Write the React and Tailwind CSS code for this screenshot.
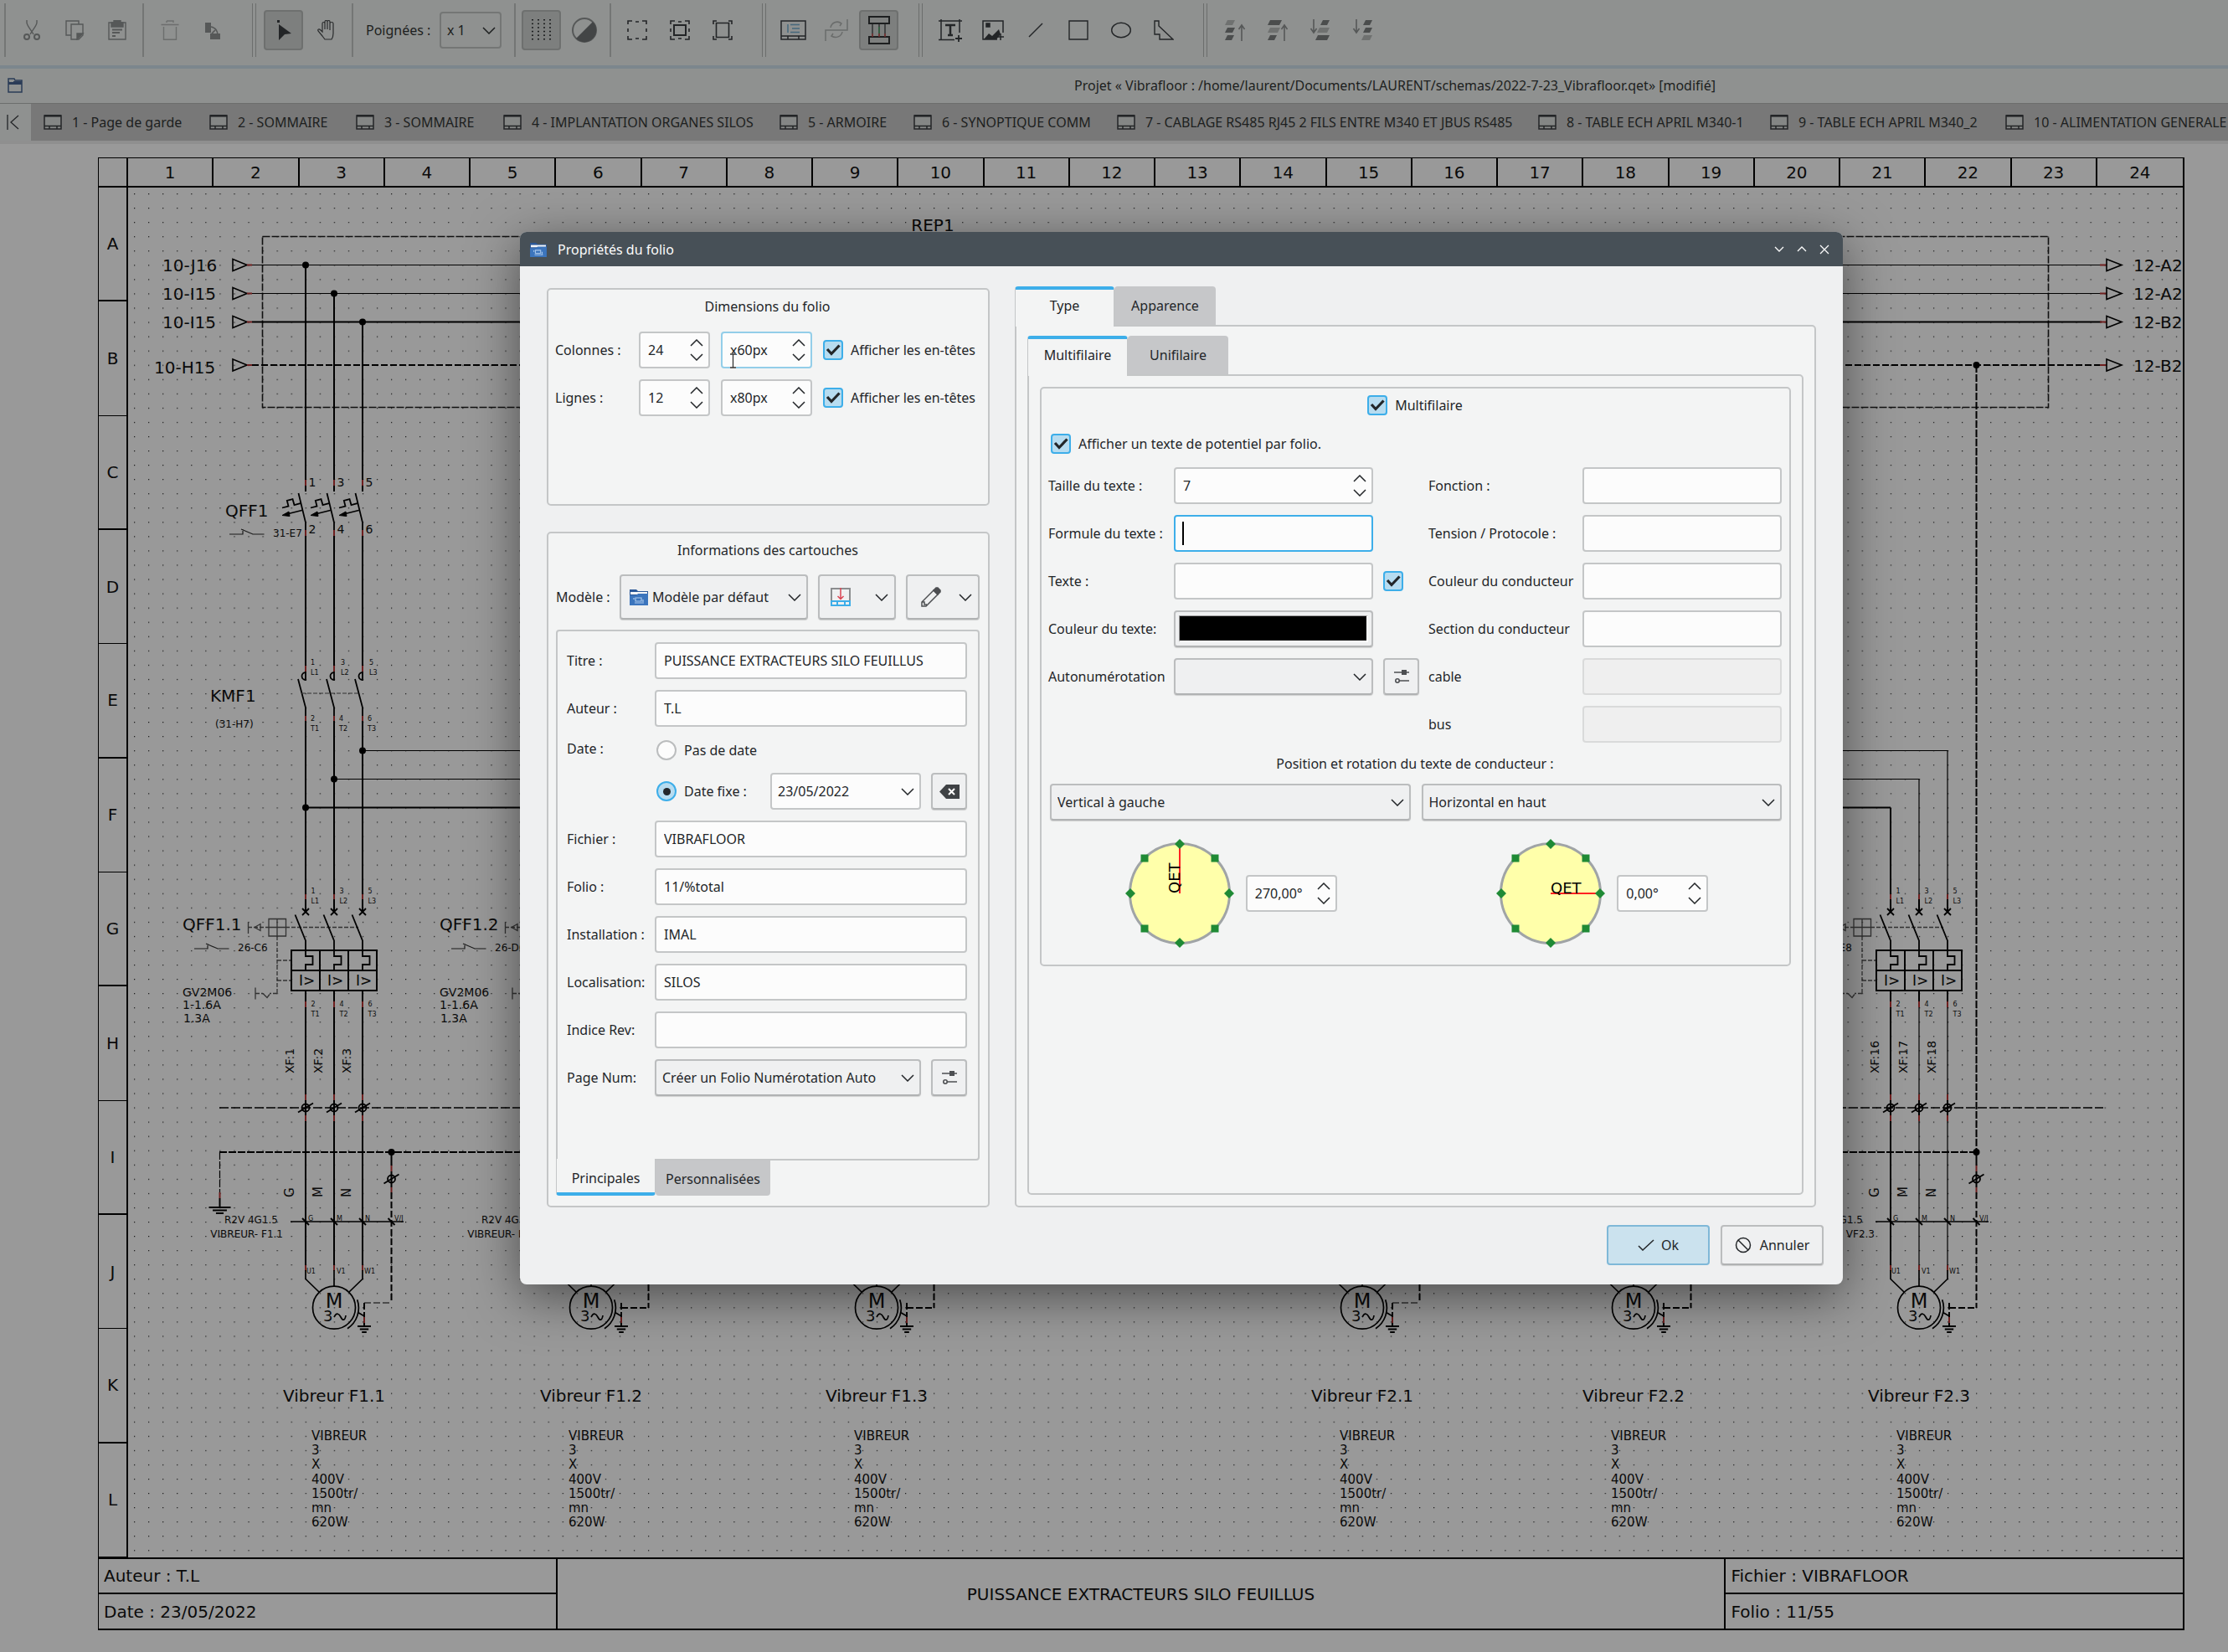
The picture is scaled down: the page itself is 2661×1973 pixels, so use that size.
import React from "react";

/* ------------------------------------------------------------------ */
/* Toolbar icons                                                       */
/* ------------------------------------------------------------------ */

const Icon = ({ children, className = "" }) => (
  <svg width="24" height="24" viewBox="0 0 24 24" fill="none" stroke="currentColor" strokeWidth="1.4" className={className} aria-hidden="true">
    {children}
  </svg>
);

const DIM = "text-[#565858]";

const icons = {
  cut: (
    <Icon className={DIM}>
      <path d="M6 0v3c0 3 5 9 8 14M18 0v3c0 3-5 9-8 14" />
      <circle cx="6" cy="20" r="3" strokeWidth="2" />
      <circle cx="18" cy="20" r="3" strokeWidth="2" />
    </Icon>
  ),
  copy: (
    <Icon className={DIM}>
      <path d="M8 18H2V1h15v4" />
      <path d="M8 5h10l4 0v13l-5 5H8z" />
      <path d="M15 16h7l-7 7z" fill="currentColor" />
    </Icon>
  ),
  paste: (
    <Icon className={DIM}>
      <path d="M2 3h20v20H2z" />
      <path d="M5 3h3V0h8v3h3v5H5z" fill="currentColor" />
      <path d="M6 11.500h12M6 15h9M6 19h4" strokeWidth="2" />
    </Icon>
  ),
  trash: (
    <Icon className="text-[#6c6e6d]">
      <path d="M1.500 5.500h21M8 1h8v2M8 3V1M4.500 8v15.300h15V8" />
    </Icon>
  ),
  rotate: (
    <Icon className={DIM}>
      <path d="M3 3h7v12H3zM9 16h12v7H9z" fill="currentColor" stroke="none" />
      <path d="M10 8c5 1 8 4 8 10M15 12l-4 4" strokeWidth="1.600" />
    </Icon>
  ),
  pointer: (
    <Icon className="text-[#232527]">
      <path d="M4 0h3v3H4zM6 5l15 11-8 1-7 7z" fill="currentColor" stroke="none" />
    </Icon>
  ),
  hand: (
    <Icon className="text-[#2a2c2d]">
      <path d="M7 19L2 13c-1-2 1-3 3-1l2 2V4c0-2 3-2 3 0v7V2c0-2 3-2 3 0v9V2c0-2 3-2 3 0v10-8c0-2 4-2 4 0v12c0 4-2 7-2 7H10z" strokeWidth="1.200" />
    </Icon>
  ),
  contrast: (
    <svg width="32" height="32" viewBox="0 0 32 32" aria-hidden="true">
      <circle cx="16" cy="16" r="14" fill="#8f9190" stroke="#565858" strokeWidth="2" />
      <path d="M26 6A14 14 0 1 1 6 26z" fill="#434546" />
    </svg>
  ),
  corners: (
    <Icon className="text-[#232527]">
      <path d="M1 5V1h5M18 1h5v4M1 19v4h5M18 23h5v-4M10 2h4M10 22h4M1 10v4M23 10v4" strokeWidth="1.600" />
    </Icon>
  ),
  cornersBox: (
    <Icon className="text-[#232527]">
      <path d="M1 5V1h5M18 1h5v4M1 19v4h5M18 23h5v-4M10 2h4M10 22h4M1 10v4M23 10v4" strokeWidth="1.600" />
      <path d="M5 6h14v12H5z" strokeWidth="2" />
    </Icon>
  ),
  cornersFrame: (
    <Icon className="text-[#232527]">
      <path d="M1 5V1h4M19 1h4v4M1 19v4h4M19 23h4v-4" strokeWidth="1.600" />
      <path d="M4.500 3.500h15v17h-15z" strokeWidth="1.600" />
    </Icon>
  ),
  titleblock: (
    <svg width="31" height="24" viewBox="0 0 31 24" fill="none" stroke="#232527" strokeWidth="1.500" aria-hidden="true">
      <path d="M1 1h29v22H1zM1 19h29M9 19v4M22 19v4" />
      <path d="M9 5v10M12 5.500h11M14 10h9M12 14.500h11" stroke="#46687c" />
    </svg>
  ),
  wire: (
    <svg width="28" height="26" viewBox="0 0 28 26" fill="none" stroke="#6a6c6b" strokeWidth="1.500" aria-hidden="true">
      <path d="M1 26V13h26V0" />
      <path d="M7 10c1-6 8-9 13-5l-2 3M21 15c-1 6-8 8-13 5l2-3" />
    </svg>
  ),
  autoWire: (
    <svg width="26" height="34" viewBox="0 0 26 34" fill="none" stroke="#1d1f20" strokeWidth="2" aria-hidden="true">
      <path d="M1 1h24v8H1zM1 25h24v8H1z" />
      <path d="M5 9v16M13 9v16M20 9v16" strokeWidth="1.200" />
      <path d="M13 13v8" stroke="#2c7040" strokeWidth="1.200" />
      <path d="M5 21v4M13 21v4M20 21v4" stroke="#8b2f2f" strokeWidth="1.200" />
    </svg>
  ),
  text: (
    <svg width="28" height="27" viewBox="0 0 28 27" fill="none" stroke="#232527" strokeWidth="1.500" aria-hidden="true">
      <path d="M0 2h28M3 0v25M25 0v16M0 24.500h19" />
      <path d="M8 7h12M14 7v12M11 19h6" strokeWidth="2.500" />
      <path d="M20 23h8M24 19v8" strokeWidth="1.800" />
    </svg>
  ),
  image: (
    <svg width="26" height="24" viewBox="0 0 26 24" fill="none" stroke="#232527" strokeWidth="1.500" aria-hidden="true">
      <path d="M25 15V1H1v22h17" />
      <path d="M5 4h4v4H5z" fill="#232527" />
      <path d="M2 23l6-7 4 3 8-8 2 6-5 6z" fill="#232527" stroke="none" />
      <path d="M18 20h8M22 16v8" />
    </svg>
  ),
  line: (
    <Icon className="text-[#232527]">
      <path d="M4 20L20 4" />
    </Icon>
  ),
  rect: (
    <Icon className="text-[#232527]">
      <path d="M1 1h22v22H1z" />
    </Icon>
  ),
  ellipse: (
    <Icon className="text-[#232527]">
      <ellipse cx="12" cy="12" rx="11.300" ry="8.700" />
    </Icon>
  ),
  polyline: (
    <Icon className="text-[#232527]">
      <path d="M1 1h5v6l17 16H7v-6H1z" />
    </Icon>
  ),
};

const LAYER_KINDS = {
  top: { widths: [9, 9, 8], fills: ["#6f7170", "#4b4d4d", "#4b4d4d"] },
  up: { widths: [14, 12, 8], fills: ["#4b4d4d", "#6f7170", "#4b4d4d"] },
  downOne: { widths: [8, 12, 14], fills: ["#4b4d4d", "#6f7170", "#4b4d4d"], down: true },
  bottom: { widths: [8, 8, 10], fills: ["#4b4d4d", "#4b4d4d", "#6f7170"], down: true },
};

const LayerIcon = ({ kind }) => {
  const { widths, fills, down } = LAYER_KINDS[kind];
  return (
    <svg width="26" height="26" viewBox="0 0 26 26" aria-hidden="true">
      {[1, 10, 19].map((y, i) => (
        <path key={y} d={down ? `M24 ${y}h-${widths[i]}l-3 6h${widths[i]}z` : `M4 ${y}h${widths[i]}l-3 6h-${widths[i]}z`} fill={fills[i]} />
      ))}
      <path d={down ? "M5 0v15M1.500 11l3.500 5 3.500-5" : "M21 26V7M17.500 12l3.500-5 3.500 5"} fill="none" stroke="#565858" strokeWidth="1.600" />
    </svg>
  );
};

const ToolButton = ({ label, pressed, children }) => (
  <button
    type="button"
    aria-label={label}
    className={
      "flex h-12 w-[47px] shrink-0 items-center justify-center rounded-[4px] " +
      (pressed ? "border-2 border-[#6e706f] bg-[#7d7f7e]" : "")
    }
  >
    {children}
  </button>
);

const Sep = () => <span className="mx-[3px] h-16 w-0.5 shrink-0 bg-[#747675]" />;
const BarEnd = () => <span className="mr-[5px] ml-5 h-16 w-[5px] shrink-0 border-x border-[#6c6e6d]" />;

const Toolbar = () => (
  <div role="toolbar" className="flex h-[78px] items-center gap-1 bg-[#8f9190] pb-1.5 pl-0.5">
    <Sep />
    <ToolButton label="Couper">{icons.cut}</ToolButton>
    <ToolButton label="Copier">{icons.copy}</ToolButton>
    <ToolButton label="Coller">{icons.paste}</ToolButton>
    <Sep />
    <ToolButton label="Supprimer">{icons.trash}</ToolButton>
    <ToolButton label="Pivoter">{icons.rotate}</ToolButton>
    <BarEnd />
    <ToolButton label="Sélection" pressed>{icons.pointer}</ToolButton>
    <ToolButton label="Déplacer">{icons.hand}</ToolButton>
    <Sep />
    <label htmlFor="handles" className="ml-1 w-[88px] pl-1 text-base whitespace-nowrap">Poignées :</label>
    <div className="relative h-11 w-[74px]">
      <select id="handles" className="h-full w-full appearance-none rounded-[4px] border-2 border-[#747675] pl-[7px] text-base">
        <option>x 1</option>
      </select>
      <Chevron className="pointer-events-none absolute top-[18px] right-[7px]" />
    </div>
    <span className="w-1" />
    <Sep />
    <ToolButton label="Grille" pressed>
      <svg width="26" height="26" viewBox="0 0 26 26" aria-hidden="true">
        {[0, 1, 2, 3].map((c) =>
          [0, 1, 2, 3, 4, 5].map((r) => <rect key={c + "-" + r} x={c * 7 + 1} y={r * 4.6} width="2" height="1.500" fill="#1d1f20" />)
        )}
      </svg>
    </ToolButton>
    <ToolButton label="Contraste">{icons.contrast}</ToolButton>
    <Sep />
    <ToolButton label="Zone">{icons.corners}</ToolButton>
    <ToolButton label="Zoom adapté">{icons.cornersBox}</ToolButton>
    <ToolButton label="Zoom page">{icons.cornersFrame}</ToolButton>
    <BarEnd />
    <ToolButton label="Propriétés du folio">{icons.titleblock}</ToolButton>
    <ToolButton label="Conducteurs">{icons.wire}</ToolButton>
    <ToolButton label="Conducteurs automatiques" pressed>{icons.autoWire}</ToolButton>
    <BarEnd />
    <ToolButton label="Ajouter un texte">{icons.text}</ToolButton>
    <ToolButton label="Ajouter une image">{icons.image}</ToolButton>
    <ToolButton label="Ajouter une ligne">{icons.line}</ToolButton>
    <ToolButton label="Ajouter un rectangle">{icons.rect}</ToolButton>
    <ToolButton label="Ajouter une ellipse">{icons.ellipse}</ToolButton>
    <ToolButton label="Ajouter une polyligne">{icons.polyline}</ToolButton>
    <BarEnd />
    <ToolButton label="Premier plan"><LayerIcon kind="top" /></ToolButton>
    <ToolButton label="Rapprocher"><LayerIcon kind="up" /></ToolButton>
    <ToolButton label="Éloigner"><LayerIcon kind="downOne" /></ToolButton>
    <ToolButton label="Arrière-plan"><LayerIcon kind="bottom" /></ToolButton>
  </div>
);

/* ------------------------------------------------------------------ */
/* Folio tabs                                                          */
/* ------------------------------------------------------------------ */

const FOLIOS = [
  ["1 - Page de garde", "w-[164px]"],
  ["2 - SOMMAIRE", "w-[141px]"],
  ["3 - SOMMAIRE", "w-[142px]"],
  ["4 - IMPLANTATION ORGANES SILOS", "w-[296px]"],
  ["5 - ARMOIRE", "w-[126px]"],
  ["6 - SYNOPTIQUE COMM", "w-[209px]"],
  ["7 - CABLAGE RS485 RJ45 2 FILS ENTRE M340 ET JBUS RS485", "w-[469px]"],
  ["8 - TABLE ECH APRIL M340-1", "w-[243px]"],
  ["9 - TABLE ECH APRIL M340_2", "w-[247px]"],
  ["10 - ALIMENTATION GENERALE", "w-[266px]"],
];

const FolioTabs = () => (
  <div className="flex h-[49px] items-stretch border-y border-b-4 border-t-[#6c6e6d] border-b-[#8f8f8f] bg-[#787878]">
    <button type="button" aria-label="Premier folio" className="flex w-[37px] shrink-0 items-center justify-center bg-[#8f9190] pr-1.5">
      <svg width="16" height="18" viewBox="0 0 16 18" fill="none" stroke="#232527" strokeWidth="1.300" aria-hidden="true">
        <path d="M1 0v18M14 1L5 9l9 8" />
      </svg>
    </button>
    <div role="tablist" className="flex min-w-0 flex-1 items-center gap-[34px] overflow-hidden pl-[15px]">
      {FOLIOS.map(([name, width]) => (
        <button key={name} type="button" role="tab" className={"flex h-full shrink-0 items-center gap-3 text-base whitespace-nowrap " + width}>
          <svg width="22" height="18" viewBox="0 0 22 18" fill="#848685" stroke="#232527" strokeWidth="1.500" className="shrink-0" aria-hidden="true">
            <path d="M1 1h20v16H1zM1 13.500h20M7 13.500v3.500M16 13.500v3.500" />
            <path d="M1 1.300h20" strokeWidth="2.600" />
          </svg>
          {name}
        </button>
      ))}
    </div>
  </div>
);

/* ------------------------------------------------------------------ */
/* Schematic                                                           */
/* ------------------------------------------------------------------ */

const RED = "#6e1f1f";
const PHASES = [365, 399, 433];

const T = ({ x, y, s = 20, children, anchor }) => (
  <text x={x} y={y} fontSize={s} textAnchor={anchor} fill="#0a0a0a">{children}</text>
);

const V = ({ x, y1, y2, w = 2, c = "#000", dash }) => (
  <line x1={x} x2={x} y1={y1} y2={y2} stroke={c} strokeWidth={w} strokeDasharray={dash} />
);

const H = ({ y, x1, x2, w = 2, c = "#000", dash }) => (
  <line x1={x1} x2={x2} y1={y} y2={y} stroke={c} strokeWidth={w} strokeDasharray={dash} />
);

const Terminal = ({ x, y }) => (
  <g fill="none" stroke="#000" strokeWidth="1.800">
    <circle cx={x} cy={y} r="4.500" />
    <path d={`M${x - 9} ${y + 5.500}L${x + 9} ${y - 5.500}`} />
  </g>
);

const AuxContact = ({ x, y, label }) => (
  <g>
    <path d={`M${x} ${y}h16v-6M${x + 14} ${y - 6}l14 6h13.500`} fill="none" stroke="#1b1b1b" strokeWidth="1.200" />
    <T x={x + 52} y={y + 3} s={12}>{label}</T>
  </g>
);

const Ground = ({ x, y, r }) => (
  <path
    d={`M${x - r} ${y}h${r * 2}M${x - r * 0.65} ${y + 3.5}h${r * 1.3}M${x - r * 0.35} ${y + 7}h${r * 0.7}`}
    stroke="#000"
    strokeWidth="1.800"
  />
);

const Motor = ({ earthY, dx, name }) => (
  <g transform={`translate(${dx} 0)`}>
    {PHASES.map((x) => (
      <V key={x} x={x} y1={1511} y2={1518} c={RED} w={2} />
    ))}
    <g fill="none" stroke="#000" strokeWidth="1.700">
      <path d="M365 1517v10.500l16 15.500M433 1517v10.500l-16 15.500M399 1517v19" />
      <circle cx="399" cy="1561.700" r="25.500" />
      <path d="M426.700 1552.300A29.500 29.500 0 0 1 415 1586.700M428.500 1568l6 3.500" />
      <path d="M399 1573c3-6 6-4 8 0s5 5 6-2" />
    </g>
    <T x={399} y={1562} s={24} anchor="middle">M</T>
    <T x={386} y={1578} s={18}>3</T>
    <T x={366} y={1521} s={8}>U1</T>
    <T x={402} y={1521} s={8}>V1</T>
    <T x={435} y={1521} s={8}>W1</T>
    <V x={467.5} y1={1424} y2={earthY} dash="8 3" />
    <V x={435} y1={1556} y2={1573} dash="8 3" />
    <V x={435} y1={1573} y2={1580} c={RED} />
    <V x={435} y1={1580} y2={1584} />
    <Ground x={435} y={1584} r={8} />
    <H y={earthY} x1={435} x2={468} dash="8 3" w={earthY === 1556 ? 1.2 : 2} />
    <T x={399} y={1674} anchor="middle">{name}</T>
    {["VIBREUR", "3", "X", "400V", "1500tr/", "mn", "620W"].map((line, i) => (
      <T key={line} x={372} y={1720 + i * 17.2} s={15}>{line}</T>
    ))}
  </g>
);

const FeederLabels = ({ dx, name, aux, cable, cableEnd = 338 }) => (
  <g transform={`translate(${dx} 0)`}>
    <T x={218} y={1111}>{name}</T>
    <g fill="none" stroke="#333" strokeWidth="1.300">
      <path d="M296.500 1101v14M304 1107.500l7-4v8z" />
      <path d="M321 1097.500h20.500v20.500H321zM331 1097.500v20.500M321 1107.500h20.500" />
      <path d="M296 1107.500h25M341 1107.500h87M331 1118v68M331 1147h17M331 1171h17M331 1186.500h-9M305 1186.500h9" strokeDasharray="5 2" />
      <path d="M314 1186.500l5 5 3-4M305 1179.500v14" />
    </g>
    <AuxContact x={232} y={1133} label={aux} />
    <T x={218} y={1190} s={14}>GV2M06</T>
    <T x={218} y={1205} s={14}>1-1.6A</T>
    <T x={219} y={1221} s={14}>1.3A</T>
    <T x={332} y={1461} s={12} anchor="end">R2V 4G1.5</T>
    <T x={cableEnd} y={1478} s={12} anchor="end">{cable}</T>
  </g>
);

const FeederPhases = ({ dx, wires, thin }) => (
  <g transform={`translate(${dx} 0)`}>
    {PHASES.map((x, i) => {
      const w = thin && i > 0 ? 1.2 : 2;
      return (
        <g key={x}>
          <V x={x} y1={[965, 930, 896][i]} y2={1068} w={w} />
          <V x={x} y1={1068} y2={1074} c={RED} />
          <V x={x} y1={1074} y2={1089} />
          <path d={`M${x - 4} ${1085}l8 8M${x + 4} 1085l-8 8M${x - 12.5} 1092.500L${x} 1123.500V1142h8.500v10H${x}v7`} fill="none" stroke="#000" strokeWidth="1.800" />
          <rect x={x - 17} y="1135" width="34" height="24" fill="none" stroke="#000" strokeWidth="2" />
          <rect x={x - 17} y="1159" width="34" height="24" fill="none" stroke="#000" strokeWidth="2" />
          <T x={x - 8} y={1177} s={17}>I&gt;</T>
          <V x={x} y1={1183} y2={1196} />
          <V x={x} y1={1196} y2={1203} c={RED} />
          <V x={x} y1={1203} y2={1307} w={w} />
          <V x={x} y1={1307} y2={1314} c={RED} />
          <V x={x} y1={1314} y2={1332} />
          <V x={x} y1={1332} y2={1339} c={RED} />
          <V x={x} y1={1339} y2={1511} w={w} />
          <Terminal x={x} y={1323} />
          <T x={x + 6.5} y={1067} s={8}>{String(i * 2 + 1)}</T>
          <T x={x + 6.5} y={1079} s={8}>{"L" + (i + 1)}</T>
          <T x={x + 6.5} y={1202} s={8}>{String(i * 2 + 2)}</T>
          <T x={x + 6.5} y={1214} s={8}>{"T" + (i + 1)}</T>
          <path d={`M${x - 4} 1455l8 8`} stroke="#000" strokeWidth="2" />
          <g transform={`translate(${x - 14} 1282) rotate(-90)`}>
            <T x={0} y={0} s={14}>{"XF:" + wires[i]}</T>
          </g>
          <g transform={`translate(${x - 14} 1430) rotate(-90)`}>
            <T x={0} y={0} s={15}>{"GMN"[i]}</T>
          </g>
          <T x={x + 3} y={1458} s={8}>{"GMN"[i]}</T>
        </g>
      );
    })}
    <V x={467.5} y1={1376} y2={1392} />
    <V x={467.5} y1={1392} y2={1399} c={RED} />
    <V x={467.5} y1={1399} y2={1418} />
    <V x={467.5} y1={1418} y2={1424} c={RED} />
    <circle cx="467.500" cy="1376" r="4" />
    <Terminal x={467.5} y={1408} />
    <H y={1459} x1={347} x2={482} w={1.6} />
    <path d="M463.500 1455l8 8" stroke="#000" strokeWidth="2" />
    <T x={471} y={1458} s={8}>V/J</T>
  </g>
);

const LABELS = [
  { dx: 0, name: "QFF1.1", aux: "26-C6", cable: "VIBREUR- F1.1" },
  { dx: 307, name: "QFF1.2", aux: "26-D6", cable: "VIBREUR- F1.2" },
  { dx: 1893, name: "QFF2.3", aux: "26-E8", cable: "VIBREUR- VF2.3", cableEnd: 346 },
];

const MOTORS = [
  { dx: 0, earthY: 1556, name: "Vibreur F1.1" },
  { dx: 307, earthY: 1562, name: "Vibreur F1.2" },
  { dx: 648, earthY: 1562, name: "Vibreur F1.3" },
  { dx: 1228, earthY: 1556, name: "Vibreur F2.1" },
  { dx: 1552, earthY: 1562, name: "Vibreur F2.2" },
  { dx: 1893, earthY: 1562, name: "Vibreur F2.3" },
];

const SUPPLIES = [
  { y: 316.5, from: "10-J16", to: "12-A2", x: 194, w: 1.2 },
  { y: 350.5, from: "10-I15", to: "12-A2", x: 194, w: 1.2 },
  { y: 384.5, from: "10-I15", to: "12-B2", x: 194, w: 2 },
  { y: 436, from: "10-H15", to: "12-B2", x: 184, w: 2, dash: "8 3" },
];

const Schematic = () => (
  <svg viewBox="153 224 2454 1636" className="block h-auto w-full" fontFamily="'DejaVu Sans', sans-serif" role="img" aria-label="Schéma électrique">
    <defs>
      <pattern id="grid-dots" x="160" y="231" width="17.055" height="17.055" patternUnits="userSpaceOnUse">
        <rect width="1.200" height="1.200" fill="#151515" />
      </pattern>
    </defs>
    <rect x="153" y="224" width="2454" height="1636" fill="url(#grid-dots)" />

    <T x={1114} y={276} anchor="middle">REP1</T>
    <rect x="313.500" y="282.500" width="2133" height="204" fill="none" stroke="#111" strokeWidth="1.600" strokeDasharray="9 2" />

    {SUPPLIES.map((s) => (
      <g key={s.y}>
        <T x={s.x} y={s.y + (s.dash ? 9.5 : 7.5)}>{s.from}</T>
        <path d={`M278 ${s.y - 7}l17 7-17 7z`} fill="none" stroke="#000" strokeWidth="1.600" />
        <H y={s.y} x1={295} x2={301} c={RED} />
        <H y={s.y} x1={301} x2={2510} w={s.w} dash={s.dash} />
        <H y={s.y} x1={2508} x2={2516} c={RED} />
        <path d={`M2516 ${s.y - 7}l18 7-18 7z`} fill="none" stroke="#000" strokeWidth="1.600" />
        <T x={2548} y={s.y + 7.5}>{s.to}</T>
      </g>
    ))}

    {PHASES.map((x, i) => (
      <g key={x}>
        <circle cx={x} cy={316.5 + i * 34} r="4" />
        <V x={x} y1={316.5 + i * 34} y2={573} />
        <V x={x} y1={573} y2={580} c={RED} />
        <V x={x} y1={580} y2={587} />
        <path
          d={`M${x - 8.5} 589L${x} 624v9M${x - 28} 606.500l7.500-2-1.700-6.700 6.700-1.700 2 7 7.300-2M${x - 4.5} 609.500l-18 4.500`}
          fill="none"
          stroke="#000"
          strokeWidth="1.800"
        />
        <path d={`M${x - 28} 615.500l8-4.500 1 5.500z`} stroke="#000" />
        <V x={x} y1={633} y2={640} c={RED} />
        <T x={x + 3.5} y={581} s={14}>{String(i * 2 + 1)}</T>
        <T x={x + 3.5} y={637} s={14}>{String(i * 2 + 2)}</T>

        <V x={x} y1={640} y2={795} />
        <V x={x} y1={795} y2={802} c={RED} />
        <path d={`M${x} 802v10a4.500 4.500 0 0 1 0-9M${x - 9} 811L${x} 845v10`} fill="none" stroke="#000" strokeWidth="1.800" />
        <V x={x} y1={855} y2={861} c={RED} />
        <V x={x} y1={861} y2={966} />
        <T x={x + [6, 8, 8][i]} y={794} s={8}>{String(i * 2 + 1)}</T>
        <T x={x + [6, 8, 8][i]} y={806} s={8}>{"L" + (i + 1)}</T>
        <T x={x + 6} y={861} s={8}>{String(i * 2 + 2)}</T>
        <T x={x + 6} y={873} s={8}>{"T" + (i + 1)}</T>
        <circle cx={x} cy={[964.5, 930.5, 896.5][i]} r="4" />
        <H y={[964.5, 930.5, 896.5][i]} x1={x} x2={x + 1893} w={i === 0 ? 2 : 1.2} />
      </g>
    ))}
    <H y={828} x1={360} x2={428} w={1.2} c="#333" dash="5 2" />

    <T x={269} y={617}>QFF1</T>
    <AuxContact x={274} y={638} label="31-E7" />
    <T x={251} y={838}>KMF1</T>
    <T x={257} y={869} s={12}>(31-H7)</T>

    <H y={1323} x1={262} x2={2512} w={1.6} dash="11 3" />
    <H y={1376} x1={262} x2={2361} dash="9 2" />
    <V x={262.5} y1={1376} y2={1424} w={1.2} dash="9 2" />
    <V x={262.5} y1={1424} y2={1431} c={RED} />
    <V x={262.5} y1={1431} y2={1442} />
    <Ground x={262.5} y={1442} r={13} />
    <circle cx="2360.500" cy="436" r="4" />
    <V x={2360.5} y1={436} y2={1376} dash="9 2" />

    {LABELS.map((f) => (
      <FeederLabels key={f.name} {...f} />
    ))}
    <FeederPhases dx={0} wires={[1, 2, 3]} />
    <FeederPhases dx={1893} wires={[16, 17, 18]} thin />
    {MOTORS.map((m) => (
      <Motor key={m.name} {...m} />
    ))}
  </svg>
);

const Sheet = () => (
  <div className="mt-4 mr-[52px] ml-[117px] border-t border-r-2 border-b-2 border-l border-black font-['DejaVu_Sans',sans-serif] text-xl text-[#0a0a0a]">
    <div className="grid grid-cols-[35px_1fr]">
      <div className="h-[35px] border-r-2 border-b-2 border-black" />
      <div className="grid grid-cols-24 border-b-2 border-black">
        {Array.from({ length: 24 }, (_, i) => (
          <div key={i} className="flex items-center justify-center border-r-2 border-black last:border-r-0">{i + 1}</div>
        ))}
      </div>
      <div className="grid grid-rows-12 border-r-2 border-black">
        {"ABCDEFGHIJKL".split("").map((l) => (
          <div key={l} className="flex items-center justify-center border-black odd:border-b-2 even:border-b last:border-b-0">{l}</div>
        ))}
      </div>
      <Schematic />
    </div>
    <div className="grid grid-cols-[22%_1fr_22%] border-t-2 border-black">
      <div className="border-r-2 border-black">
        <div className="flex h-[42px] items-center border-b-2 border-black pl-1.5">Auteur : T.L</div>
        <div className="flex h-[41px] items-center pl-1.5">Date : 23/05/2022</div>
      </div>
      <div className="flex items-center justify-center">PUISSANCE EXTRACTEURS SILO FEUILLUS</div>
      <div className="border-l-2 border-black">
        <div className="flex h-[42px] items-center border-b-2 border-black pl-1.5">Fichier : VIBRAFLOOR</div>
        <div className="flex h-[41px] items-center pl-1.5">Folio : 11/55</div>
      </div>
    </div>
  </div>
);

/* ------------------------------------------------------------------ */
/* Dialog controls                                                     */
/* ------------------------------------------------------------------ */

const Chevron = ({ up, className = "" }) => (
  <svg width="16" height="9" viewBox="0 0 16 9" fill="none" stroke="currentColor" strokeWidth="1.500" className={className} aria-hidden="true">
    <path d={up ? "M1 8l7-7 7 7" : "M1 1l7 7 7-7"} />
  </svg>
);

const FIELD = "h-11 w-full min-w-0 rounded-[4px] border-2 px-[9px] text-base outline-none ";
const BUTTON = "rounded-[4px] border-2 border-[#bbbdbe] border-b-[#b0b2b3] bg-[#eff0f1] shadow-[0_1px_1px_rgba(0,0,0,0.15)] ";

const Field = ({ id, value = "", disabled, focused, label }) => (
  <div className="relative min-w-0">
    <input
      id={id}
      type="text"
      aria-label={label}
      defaultValue={value}
      disabled={disabled}
      className={FIELD + (focused ? "border-[#3daee9] bg-[#fcfcfc]" : disabled ? "border-[#d9dada] bg-[#efefef]" : "border-[#c4c6c7] bg-[#fcfcfc]")}
    />
    {focused && <span className="absolute top-2 left-2.5 h-7 w-0.5 bg-black" />}
  </div>
);

const Spin = ({ id, value, hover, label, className = "" }) => (
  <div className={"relative min-w-0 " + className}>
    <input id={id} type="text" role="spinbutton" aria-label={label} defaultValue={value} className={FIELD + "bg-[#fcfcfc] pr-7 " + (hover ? "border-[#93cee9]" : "border-[#c4c6c7]")} />
    <div className="absolute top-0 right-2 flex h-full flex-col justify-center gap-2">
      <button type="button" aria-label="Augmenter"><Chevron up className="block" /></button>
      <button type="button" aria-label="Diminuer"><Chevron className="block" /></button>
    </div>
  </div>
);

const Combo = ({ id, value, label, light, icon, className = "h-11" }) => (
  <div className={"relative min-w-0 flex-1 " + className}>
    <select
      id={id}
      aria-label={label}
      className={
        "h-full w-full appearance-none truncate pr-7 text-base " +
        (light ? "rounded-[4px] border-2 border-[#c4c6c7] bg-[#fcfcfc] " : BUTTON) +
        (icon ? "pl-[37px]" : "pl-[7px]")
      }
    >
      <option>{value}</option>
    </select>
    {icon && <span className="pointer-events-none absolute inset-y-0 left-3 flex items-center">{icon}</span>}
    <Chevron className="pointer-events-none absolute top-1/2 right-2 -mt-1" />
  </div>
);

const Check = ({ id, label, children }) => (
  <div className="flex items-center gap-[9px]">
    <span className="relative flex">
      <input id={id} type="checkbox" defaultChecked aria-label={label} className="size-6 appearance-none rounded-[4px] border-2 border-[#3daee9] bg-[#b7dcf0]" />
      <svg width="24" height="24" viewBox="0 0 24 24" fill="none" stroke="#232629" strokeWidth="3.200" className="pointer-events-none absolute inset-0" aria-hidden="true">
        <path d="M5 11l5 5.500L19.500 6.500" />
      </svg>
    </span>
    {children && <label htmlFor={id} className="whitespace-nowrap">{children}</label>}
  </div>
);

const Radio = ({ id, checked, children }) => (
  <div className="flex items-center gap-[9px] pl-0.5">
    <span className="relative flex">
      <input
        id={id}
        type="radio"
        name="date"
        defaultChecked={checked}
        className={"size-6 appearance-none rounded-full border-2 " + (checked ? "border-[#3daee9] bg-[#b7dcf0]" : "border-[#bbbdbe] bg-[#fcfcfc]")}
      />
      {checked && <span className="pointer-events-none absolute inset-0 m-auto size-[9px] rounded-full bg-[#232629]" />}
    </span>
    <label htmlFor={id} className="whitespace-nowrap">{children}</label>
  </div>
);

const FolderIcon = () => (
  <svg width="22" height="20" viewBox="0 0 22 20" aria-hidden="true">
    <path d="M0 1h8l2 2h12v16H0z" fill="#2b5797" />
    <path d="M1 4h20v3H1z" fill="#f4f6f8" />
    <path d="M0 8h8l2-2h12v14H0z" fill="#3c75bd" />
    <path d="M7 11h7v4H7zM5 13v-2M16 13v3M6 17h11" fill="none" stroke="#a9c8ec" strokeWidth="1.200" />
  </svg>
);

const SlidersButton = ({ label }) => (
  <button type="button" aria-label={label} className={BUTTON + "flex h-11 w-[43px] shrink-0 items-center justify-center"}>
    <svg width="18" height="16" viewBox="0 0 18 16" fill="none" stroke="#4d4f52" strokeWidth="1.600" aria-hidden="true">
      <path d="M0 3h18M6 13h12" />
      <path d="M9 0h6v6H9z" fill="#4d4f52" stroke="none" />
      <circle cx="4" cy="13" r="2.200" />
    </svg>
  </button>
);

const Tab = ({ active, bottom, className = "", children }) => (
  <button
    type="button"
    role="tab"
    aria-selected={!!active}
    className={
      "relative flex items-center justify-center " +
      (active
        ? "z-10 border-[#c4c6c7] bg-[#f3f4f4] " +
          (bottom
            ? "-mt-0.5 h-11 rounded-b-[4px] border-x border-b-4 border-b-[#3daee9] pt-1.5 "
            : "-mb-0.5 h-12 rounded-t-[4px] border-x border-t-4 border-t-[#3daee9] pb-1.5 ")
        : "bg-[#c6c7c9] " + (bottom ? "h-[42px] rounded-b-[4px] pt-0.5 " : "h-[46px] rounded-t-[4px] ")) +
      className
    }
  >
    {children}
  </button>
);

const PANEL = "border-2 border-[#c4c6c7] bg-[#f3f4f4] ";

const Dimensions = () => (
  <fieldset className={PANEL + "rounded-[5px] pt-2 pr-2.5 pb-[105px] pl-2"}>
    <div className="text-center leading-6">Dimensions du folio</div>
    <div className="mt-[18px] grid grid-cols-[87px_85px_109px_1fr] items-center gap-x-[13px] gap-y-[13px]">
      <label htmlFor="cols">Colonnes :</label>
      <Spin id="cols" value="24" />
      <div className="relative">
        <Spin label="Largeur des colonnes" value="x60px" hover />
        <svg width="9" height="18" viewBox="0 0 9 18" fill="none" className="absolute top-[26px] left-[10px]" aria-hidden="true">
          <path d="M1 1h7M1 17h7M4.500 1v16" stroke="#fff" strokeWidth="3" />
          <path d="M1 1h7M1 17h7M4.500 1v16" stroke="#333" strokeWidth="1.300" />
        </svg>
      </div>
      <Check id="head-cols">Afficher les en-têtes</Check>
      <label htmlFor="rows">Lignes :</label>
      <Spin id="rows" value="12" />
      <Spin label="Hauteur des lignes" value="x80px" />
      <Check id="head-rows">Afficher les en-têtes</Check>
    </div>
  </fieldset>
);

const TextRow = ({ id, label, value }) => (
  <>
    <label htmlFor={id}>{label}</label>
    <Field id={id} value={value} />
  </>
);

const TitleBlockInfo = () => (
  <fieldset className={PANEL + "flex-1 rounded-[5px] pt-2 pr-2.5 pb-3 pl-[9px]"}>
    <div className="text-center leading-6">Informations des cartouches</div>
    <div className="mt-[17px] flex items-center gap-3">
      <label htmlFor="model" className="w-16 whitespace-nowrap">Modèle :</label>
      <Combo id="model" value="Modèle par défaut" className="h-[54px]" icon={<FolderIcon />} />
      <button type="button" aria-label="Ajouter un modèle" className={BUTTON + "flex h-[54px] w-[93px] items-center justify-between pr-[7px] pl-[13px]"}>
        <svg width="24" height="22" viewBox="0 0 24 22" fill="none" strokeWidth="2" aria-hidden="true">
          <path d="M1 16V1h22v15" stroke="#8b8d8f" />
          <path d="M1 16h22v5H1zM8 16v5M17 16v5" stroke="#3daee9" />
          <path d="M12 0v13M8.500 10l3.500 3.500 3.500-3.500" stroke="#da4453" strokeWidth="1.500" />
        </svg>
        <Chevron />
      </button>
      <button type="button" aria-label="Éditer le modèle" className={BUTTON + "flex h-[54px] w-[88px] items-center justify-between pr-[7px] pl-4"}>
        <svg width="24" height="24" viewBox="0 0 24 24" fill="none" stroke="#4d4f52" strokeWidth="1.500" aria-hidden="true">
          <path d="M1 23v-5L15 4l5 5L6 23zM1 18h3v3h3" />
          <path d="M15 4l3-3h2l3 3v2l-3 3z" fill="#4d4f52" />
        </svg>
        <Chevron />
      </button>
    </div>
    <div className={PANEL + "mt-3 grid grid-cols-[105px_1fr] items-center gap-y-[13px] rounded-[4px] rounded-bl-none pt-[13px] pr-[13px] pb-[75px] pl-[11px]"}>
      <TextRow id="title" label="Titre :" value="PUISSANCE EXTRACTEURS SILO FEUILLUS" />
      <TextRow id="author" label="Auteur :" value="T.L" />
      <span className="self-start leading-[27px]">Date :</span>
      <div className="flex h-[29px] items-center"><Radio id="no-date">Pas de date</Radio></div>
      <div className="col-start-2 flex items-center gap-3">
        <div className="w-[126px]"><Radio id="fixed-date" checked>Date fixe :</Radio></div>
        <Combo label="Date" value="23/05/2022" light />
        <button type="button" aria-label="Effacer la date" className={BUTTON + "flex h-11 w-[43px] shrink-0 items-center justify-center"}>
          <svg width="24" height="17" viewBox="0 0 24 17" aria-hidden="true">
            <path d="M0 8.500L8 0h16v17H8z" fill="#3f4245" />
            <path d="M11 5l7 7M18 5l-7 7" stroke="#fff" strokeWidth="2" />
          </svg>
        </button>
      </div>
      <TextRow id="file" label="Fichier :" value="VIBRAFLOOR" />
      <TextRow id="folio" label="Folio :" value="11/%total" />
      <TextRow id="plant" label="Installation :" value="IMAL" />
      <TextRow id="location" label="Localisation:" value="SILOS" />
      <TextRow id="rev" label="Indice Rev:" value="" />
      <label htmlFor="page">Page Num:</label>
      <div className="flex gap-3">
        <Combo id="page" value="Créer un Folio Numérotation Auto" />
        <SlidersButton label="Configurer la numérotation" />
      </div>
    </div>
    <div role="tablist" className="flex">
      <Tab active bottom className="w-[119px]">Principales</Tab>
      <Tab bottom className="w-[137px]">Personnalisées</Tab>
    </div>
  </fieldset>
);

const Dial = ({ angle }) => (
  <svg width="134" height="134" viewBox="-67 -67 134 134" fontFamily="'DejaVu Sans', sans-serif" role="img" aria-label={"Angle " + angle}>
    <circle r="59.500" fill="#ffffaa" stroke="#a0a4a6" strokeWidth="3" />
    <g transform={`rotate(${angle})`}>
      <path d="M0 0h58" stroke="#f22" strokeWidth="2" />
      <text x="0" y="0" fontSize="18">QET</text>
    </g>
    {[0, 90, 180, 270].map((a) => (
      <path key={a} transform={`rotate(${a}) translate(59 0)`} d="M-6 0l6-6 6 6-6 6z" fill="#1f8a35" />
    ))}
    {[[-1, -1], [1, -1], [-1, 1], [1, 1]].map(([x, y]) => (
      <rect key={x + "," + y} x={x * 42 - 4.5} y={y * 42 - 4.5} width="9" height="9" fill="#1f8a35" />
    ))}
  </svg>
);

const Conductors = () => (
  <fieldset className={PANEL + "rounded-[5px] pt-2 pr-[9px] pb-[18px] pl-2"}>
    <div className="flex justify-center"><Check id="multi">Multifilaire</Check></div>
    <div className="mt-[22px] pl-[3px]"><Check id="one-text">Afficher un texte de potentiel par folio.</Check></div>
    <div className="mt-4 grid grid-cols-[138px_1fr_42px_172px_1fr] items-center gap-x-3 gap-y-[13px] whitespace-nowrap">
      <label htmlFor="size">Taille du texte :</label>
      <Spin id="size" value="7" />
      <span />
      <label htmlFor="function">Fonction :</label>
      <Field id="function" />

      <label htmlFor="formula">Formule du texte :</label>
      <Field id="formula" focused />
      <span />
      <label htmlFor="voltage">Tension / Protocole :</label>
      <Field id="voltage" />

      <label htmlFor="text">Texte :</label>
      <Field id="text" />
      <Check id="show-text" label="Afficher le texte" />
      <label htmlFor="wire-color">Couleur du conducteur</label>
      <Field id="wire-color" />

      <label htmlFor="text-color">Couleur du texte:</label>
      <button id="text-color" type="button" aria-label="Couleur du texte: noir" className={BUTTON + "h-11 w-full p-1"}>
        <span className="block h-full w-full border border-r-2 border-b-2 border-[#9a9a9a] border-r-white border-b-white bg-black" />
      </button>
      <span />
      <label htmlFor="section">Section du conducteur</label>
      <Field id="section" />

      <label htmlFor="autonum">Autonumérotation</label>
      <Combo id="autonum" value="" />
      <SlidersButton label="Configurer l'autonumérotation" />
      <label htmlFor="cable">cable</label>
      <Field id="cable" disabled />

      <label htmlFor="bus" className="col-start-4">bus</label>
      <Field id="bus" disabled />
    </div>
    <div className="mt-[13px] text-center leading-6">Position et rotation du texte de conducteur :</div>
    <div className="mt-3 grid grid-cols-2 gap-x-[13px] gap-y-5 pl-0.5">
      <Combo label="Position du texte vertical" value="Vertical à gauche" />
      <Combo label="Position du texte horizontal" value="Horizontal en haut" />
      <div className="flex items-center justify-center gap-3">
        <Dial angle={270} />
        <Spin label="Angle du texte vertical" value="270,00°" className="w-[109px]" />
      </div>
      <div className="flex items-center justify-center gap-3">
        <Dial angle={0} />
        <Spin label="Angle du texte horizontal" value="0,00°" className="w-[109px]" />
      </div>
    </div>
  </fieldset>
);

const ConductorTabs = () => (
  <div className="flex min-w-0 flex-1 flex-col">
    <div role="tablist" className="flex">
      <Tab active className="w-[119px]">Type</Tab>
      <Tab className="w-[121px]">Apparence</Tab>
    </div>
    <div className={PANEL + "flex flex-1 flex-col rounded-[5px] rounded-tl-none px-[13px] pt-[11px] pb-[13px]"}>
      <div role="tablist" className="flex">
        <Tab active className="w-[120px]">Multifilaire</Tab>
        <Tab className="w-[120px]">Unifilaire</Tab>
      </div>
      <div className={PANEL + "flex-1 rounded-[5px] rounded-tl-none p-[13px]"}>
        <Conductors />
      </div>
    </div>
  </div>
);

const Dialog = () => (
  <div role="dialog" aria-label="Propriétés du folio" className="absolute top-[277px] right-[460px] left-[621px] rounded-[8px] bg-[#eff0f1] text-base text-[#232629] shadow-[0_14px_60px_rgba(0,0,0,0.5)]">
    <div className="flex h-[41px] items-center rounded-t-[8px] bg-[#475057] pr-4 pl-3 text-[#fcfcfc]">
      <svg width="20" height="18" viewBox="0 0 22 20" aria-hidden="true">
        <path d="M0 1h8l2 2h12v16H0z" fill="#2b5797" />
        <path d="M1 4h20v3H1z" fill="#f4f6f8" />
        <path d="M0 8h8l2-2h12v14H0z" fill="#3c75bd" />
        <path d="M7 11h7v4H7zM5 13v-2M16 13v3M6 17h11" fill="none" stroke="#a9c8ec" strokeWidth="1.200" />
      </svg>
      <h1 className="ml-[13px] flex-1">Propriétés du folio</h1>
      <div className="flex items-center gap-[15px]">
        <button type="button" aria-label="Réduire"><svg width="12" height="7" viewBox="0 0 12 7" fill="none" stroke="currentColor" strokeWidth="1.300"><path d="M1 1l5 5 5-5" /></svg></button>
        <button type="button" aria-label="Agrandir"><svg width="12" height="7" viewBox="0 0 12 7" fill="none" stroke="currentColor" strokeWidth="1.300"><path d="M1 6l5-5 5 5" /></svg></button>
        <button type="button" aria-label="Fermer"><svg width="12" height="12" viewBox="0 0 12 12" fill="none" stroke="currentColor" strokeWidth="1.300"><path d="M1 1l10 10M11 1L1 11" /></svg></button>
      </div>
    </div>
    <div className="flex gap-[30px] pt-6 pr-8 pl-8">
      <div className="flex w-[529px] shrink-0 flex-col gap-[31px] pt-0.5">
        <Dimensions />
        <TitleBlockInfo />
      </div>
      <ConductorTabs />
    </div>
    <div className="flex justify-end gap-[13px] pt-[21px] pr-[23px] pb-[23px]">
      <button type="button" className="flex h-12 w-[123px] items-center justify-center gap-2 rounded-[4px] border-2 border-[#7fb8d8] bg-[#cbe2ee]">
        <svg width="20" height="14" viewBox="0 0 20 14" fill="none" stroke="currentColor" strokeWidth="1.500" aria-hidden="true"><path d="M1 8l5 5L19 1" /></svg>
        Ok
      </button>
      <button type="button" className={BUTTON + "flex h-12 w-[123px] items-center justify-center gap-2.5"}>
        <svg width="20" height="20" viewBox="0 0 20 20" fill="none" stroke="currentColor" strokeWidth="1.500" aria-hidden="true"><circle cx="10" cy="10" r="8.500" /><path d="M4 4l12 12" /></svg>
        Annuler
      </button>
    </div>
  </div>
);

export default function App() {
  return (
    <div className="relative min-h-screen overflow-hidden bg-[#999] font-['Noto_Sans',sans-serif] text-base text-[#1d1f20]">
      <Toolbar />
      <div className="h-1 bg-[#7c868d]" />
      <div className="flex h-[41px] items-center bg-[#8f9190] pb-0.5 pl-[9px]">
        <svg width="18" height="18" viewBox="0 0 18 18" aria-hidden="true">
          <path d="M1 17V1h7l1 2h8v14z" fill="#8f9190" stroke="#2b3c57" strokeWidth="1.500" />
          <path d="M1 4h16v4H1z" fill="#2b3c57" />
          <path d="M2 3h5v2H2z" fill="#8f9190" />
        </svg>
        <h2 className="ml-[1256px] whitespace-nowrap">Projet « Vibrafloor : /home/laurent/Documents/LAURENT/schemas/2022-7-23_Vibrafloor.qet» [modifié]</h2>
      </div>
      <FolioTabs />
      <Sheet />
      <Dialog />
    </div>
  );
}
